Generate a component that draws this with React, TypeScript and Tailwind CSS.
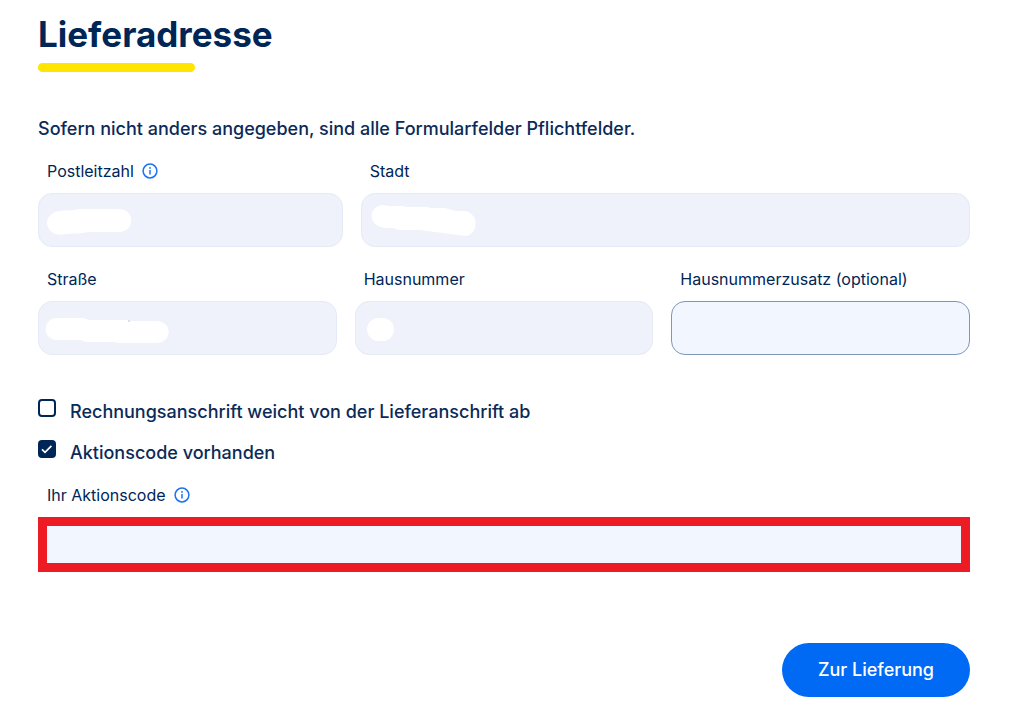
import { useState } from 'react'
import type { ReactNode } from 'react'
import clsx from 'clsx'

const InfoIcon = () => (
  <svg viewBox="0 0 16 16" className="h-4 w-4" fill="none" aria-hidden="true">
    <circle cx="8" cy="8" r="6.9" stroke="#1a73f5" strokeWidth="1.5" />
    <circle cx="8" cy="4.9" r="0.95" fill="#1a73f5" />
    <path d="M8 7v4.6" stroke="#1a73f5" strokeWidth="1.5" />
  </svg>
)

interface FieldProps {
  id: string
  label: string
  info?: boolean
  disabled?: boolean
  className?: string
  inputClassName?: string
  // drawn on top of the input
  cover?: ReactNode
}

const Field = ({
  id,
  label,
  info,
  disabled,
  className,
  inputClassName = 'h-[54px] rounded-[14px] border',
  cover,
}: FieldProps) => (
  <div className={className}>
    <div className="mb-[10px] flex h-6 items-center gap-2 pl-[9px]">
      <label
        htmlFor={id}
        className="text-base leading-6 font-normal text-[#002557]"
      >
        {label}
      </label>
      {info && (
        <button type="button" aria-label={`Info: ${label}`}>
          <InfoIcon />
        </button>
      )}
    </div>
    <div className="relative">
      <input
        id={id}
        type="text"
        disabled={disabled}
        className={clsx(
          'block w-full px-4 text-base outline-none',
          disabled
            ? 'border-[#e4ebf6] bg-[#eff2fa]'
            : 'border-[#7f97b5] bg-[#f1f6ff]',
          inputClassName,
        )}
      />
      {cover && (
        <svg
          className="pointer-events-none absolute top-0 left-0 h-[54px] w-36"
          viewBox="0 0 144 54"
          fill="white"
          aria-hidden="true"
        >
          {cover}
        </svg>
      )}
    </div>
  </div>
)

interface CheckProps {
  id: string
  label: string
  checked: boolean
  onChange: (checked: boolean) => void
}

const Check = ({ id, label, checked, onChange }: CheckProps) => (
  <div className="flex items-start gap-[14px]">
    <div className="relative h-[18px] w-[18px]">
      <input
        id={id}
        type="checkbox"
        checked={checked}
        onChange={(e) => onChange(e.target.checked)}
        className="block h-[18px] w-[18px] appearance-none rounded-[4px] border-2 border-[#002557] checked:bg-[#002557]"
      />
      {checked && (
        <svg
          viewBox="0 0 18 18"
          className="pointer-events-none absolute inset-0 h-[18px] w-[18px]"
          fill="none"
          aria-hidden="true"
        >
          <path d="M4 9.3l3 3 6.4-6.4" stroke="white" strokeWidth="1.7" />
        </svg>
      )}
    </div>
    <label htmlFor={id} className="text-lg leading-[26px]">
      {label}
    </label>
  </div>
)

const App = () => {
  const [otherBilling, setOtherBilling] = useState(false)
  const [hasCode, setHasCode] = useState(true)

  return (
    <form
      className="bg-white pt-[14px] pr-[54px] pb-2 pl-[38px] font-['Inter',sans-serif] font-medium text-[#0b2a58]"
      onSubmit={(e) => e.preventDefault()}
    >
      <h1 className="text-[35px] leading-10 font-bold text-[#002557]">
        Lieferadresse
      </h1>
      <div className="mt-[9px] h-[9px] w-[157px] rounded-full bg-[#ffe500]" />

      <p className="mt-[43px] text-lg leading-7">
        Sofern nicht anders angegeben, sind alle Formularfelder Pflichtfelder.
      </p>

      <div className="mt-4 grid grid-cols-[1fr_2fr] gap-[18px]">
        <Field
          id="plz"
          label="Postleitzahl"
          info
          disabled
          cover={
            <path d="M21 18C27 17 35 18 42 16H82C97 17 97 38 82 39H50C44 41 34 40 28 41C18 44 9 38 9 30C9 24 14 19 21 18Z" />
          }
        />
        <Field
          id="stadt"
          label="Stadt"
          disabled
          cover={
            <path d="M22 12L28 13H42L46 14H66L70 15H84L88 16L94 18H104C118 20 118 41 105 43L98 42L88 41L82 40L74 39L67 38L58 37H38L32 35H24C6 33 7 13 22 12Z" />
          }
        />
      </div>

      <div className="mt-5 grid grid-cols-3 gap-[18px]">
        <Field
          id="strasse"
          label="Straße"
          disabled
          cover={
            <>
              <path d="M19 17H45L52 19H88L93 20H118C135 20 135 42 118 42H82L77 41H48L43 39H19C4 39 4 17 19 17Z" />
              <rect x="90" y="19" width="2" height="2" fill="#dcdfe6" />
            </>
          }
        />
        <Field
          id="hausnummer"
          label="Hausnummer"
          disabled
          cover={<rect x="12" y="17" width="27" height="23" rx="11.5" />}
        />
        <Field id="zusatz" label="Hausnummerzusatz (optional)" />
      </div>

      <div className="mt-11 flex flex-col gap-[15px]">
        <Check
          id="rechnung"
          label="Rechnungsanschrift weicht von der Lieferanschrift ab"
          checked={otherBilling}
          onChange={setOtherBilling}
        />
        <Check
          id="aktion"
          label="Aktionscode vorhanden"
          checked={hasCode}
          onChange={setHasCode}
        />
      </div>

      {hasCode && (
        <Field
          id="code"
          label="Ihr Aktionscode"
          info
          className="mt-[17px]"
          inputClassName="h-[55px] border-9 border-[#ed1c24]!"
        />
      )}

      <div className="mt-[71px] flex justify-end">
        <button
          type="submit"
          className="h-[54px] rounded-full bg-[#006af5] px-9 text-lg font-medium text-white"
        >
          Zur Lieferung
        </button>
      </div>
    </form>
  )
}

export default App
